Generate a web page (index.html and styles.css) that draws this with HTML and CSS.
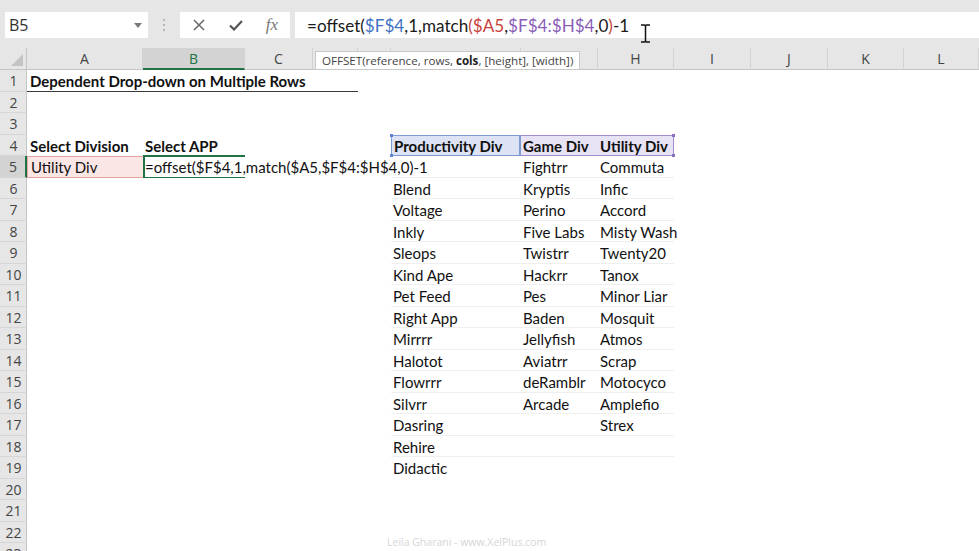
FILE: index.html
```html
<!DOCTYPE html>
<html>
<head>
<meta charset="utf-8">
<link rel="stylesheet" href="styles.css">
</head>
<body>
<div class="toolbar">
  <div class="namebox"><span>B5</span><svg width="8" height="5" viewBox="0 0 8 5"><path d="M0 0H8L4 5Z" fill="#7a7a7a"/></svg></div>
  <div class="grip"><i></i><i></i><i></i></div>
  <div class="fxbox">
    <span class="fxbtn w38"><svg width="12" height="12" viewBox="0 0 12 12"><path d="M1 1L11 11M11 1L1 11" stroke="#6b6b6b" stroke-width="1.6" fill="none"/></svg></span>
    <span class="fxbtn"><svg width="14" height="11" viewBox="0 0 14 11"><path d="M1 5.5L5 9.5L13 1" stroke="#555" stroke-width="2.2" fill="none"/></svg></span>
    <span class="fxbtn fx">fx</span>
  </div>
  <div class="formula">=offset(<span class="blue">$F$4</span>,1,match<span class="red">($A5</span>,<span class="purple">$F$4:$H$4</span>,0<span class="red">)</span>-1</div>
</div>

<div class="sheet">
  <div class="row colhead">
    <span class="corner"></span>
    <span>A</span><span class="sel">B</span><span>C</span><span></span><span></span><span></span><span></span><span>H</span><span>I</span><span>J</span><span>K</span><span>L</span>
  </div>
  <div class="row"><b class="rh">1</b><span class="cA title ul">Dependent Drop-down on Multiple Rows</span><span class="cB ul"></span><span class="cC ul"></span><span class="cD ul"></span></div>
  <div class="row"><b class="rh">2</b></div>
  <div class="row"><b class="rh">3</b></div>
  <div class="row"><b class="rh">4</b><span class="cA bold">Select Division</span><span class="cB bold">Select APP</span><span class="cF bold thF">Productivity Div</span><span class="cG bold thG">Game Div</span><span class="cH bold thH">Utility Div</span></div>
  <div class="row"><b class="rh rsel">5</b><span class="cA refA">Utility Div</span><span class="cB active"><span class="edit">=offset($F$4,1,match($A5,$F$4:$H$4,0)-1</span></span><span class="cF td"></span><span class="cG td">Fightrr</span><span class="cH td">Commuta</span></div>
  <div class="row"><b class="rh">6</b><span class="cF td">Blend</span><span class="cG td">Kryptis</span><span class="cH td">Infic</span></div>
  <div class="row"><b class="rh">7</b><span class="cF td">Voltage</span><span class="cG td">Perino</span><span class="cH td">Accord</span></div>
  <div class="row"><b class="rh">8</b><span class="cF td">Inkly</span><span class="cG td">Five Labs</span><span class="cH td">Misty Wash</span></div>
  <div class="row"><b class="rh">9</b><span class="cF td">Sleops</span><span class="cG td">Twistrr</span><span class="cH td">Twenty20</span></div>
  <div class="row"><b class="rh">10</b><span class="cF td">Kind Ape</span><span class="cG td">Hackrr</span><span class="cH td">Tanox</span></div>
  <div class="row"><b class="rh">11</b><span class="cF td">Pet Feed</span><span class="cG td">Pes</span><span class="cH td">Minor Liar</span></div>
  <div class="row"><b class="rh">12</b><span class="cF td">Right App</span><span class="cG td">Baden</span><span class="cH td">Mosquit</span></div>
  <div class="row"><b class="rh">13</b><span class="cF td">Mirrrr</span><span class="cG td">Jellyfish</span><span class="cH td">Atmos</span></div>
  <div class="row"><b class="rh">14</b><span class="cF td">Halotot</span><span class="cG td">Aviatrr</span><span class="cH td">Scrap</span></div>
  <div class="row"><b class="rh">15</b><span class="cF td">Flowrrr</span><span class="cG td">deRamblr</span><span class="cH td">Motocyco</span></div>
  <div class="row"><b class="rh">16</b><span class="cF td">Silvrr</span><span class="cG td">Arcade</span><span class="cH td">Amplefio</span></div>
  <div class="row"><b class="rh">17</b><span class="cF td">Dasring</span><span class="cG td"></span><span class="cH td">Strex</span></div>
  <div class="row"><b class="rh">18</b><span class="cF td">Rehire</span><span class="cG td"></span><span class="cH td"></span></div>
  <div class="row"><b class="rh">19</b><span class="cF">Didactic</span></div>
  <div class="row"><b class="rh">20</b></div>
  <div class="row"><b class="rh">21</b></div>
  <div class="row"><b class="rh">22</b></div>
  <div class="row"><b class="rh">23</b></div>
</div>

<div class="tooltip">OFFSET(reference, rows, <b>cols</b>, [height], [width])</div>
<svg class="ibeam" width="11" height="19" viewBox="0 0 11 19"><path d="M1 1H4.5Q5.5 1 5.5 2.5V16.5Q5.5 18 4.5 18H1M10 1H6.5Q5.5 1 5.5 2.5M5.5 16.5Q5.5 18 6.5 18H10" stroke="#111" stroke-width="1.5" fill="none"/></svg>
<div class="watermark">Leila Gharani - www.XelPlus.com</div>
</body>
</html>
```
FILE: styles.css
```css
* { box-sizing: border-box; margin: 0; padding: 0; }
html, body { width: 979px; height: 551px; overflow: hidden; background: #fff; }
body { position: relative; font-family: Lato, "Open Sans", sans-serif; color: #111; }

.toolbar { height: 48px; background: #e6e6e6; display: flex; align-items: flex-start; padding: 12px 0 0 5px; }
.namebox { width: 143px; height: 26px; background: #fff; display: flex; align-items: center; justify-content: space-between; padding: 0 6px 0 4px; font-family: "Open Sans", sans-serif; font-size: 16px; color: #333; }
.grip { width: 32px; height: 26px; display: flex; flex-direction: column; align-items: center; gap: 3px; padding-top: 7px; }
.grip i { display: block; width: 2px; height: 2px; background: #b5b5b5; }
.fxbox { width: 110px; height: 26px; background: #fff; display: flex; align-items: center; }
.fxbtn { width: 36px; height: 26px; display: flex; align-items: center; justify-content: center; }
.fxbtn.w38 { width: 38px; }
.fx { font-family: "Liberation Serif", serif; font-style: italic; font-size: 17px; color: #777; }
.formula { flex: 1; margin-left: 5px; height: 26px; background: #fff; padding-left: 12px; font-size: 17.1px; line-height: 28px; color: #1a1a1a; white-space: nowrap; }
.blue { color: #3f72c4; }
.red { color: #c7433b; }
.purple { color: #8a5db8; }

.sheet { display: flex; flex-direction: column; }
.row { display: grid; grid-template-columns: 27px 116px 102px 68px 45px 33px 130px 77px 76px 77px 77px 76px 75px; grid-template-rows: 100%; height: 21.5px; font-size: 15px; line-height: 22.5px; }
.row > * { white-space: nowrap; padding-left: 2px; }
.colhead { height: 22px; background: #e6e6e6; font-family: "Open Sans", sans-serif; font-size: 14px; color: #444; line-height: 22px; }
.colhead > span { text-align: center; padding: 0; border-right: 1px solid #d2d2d2; border-bottom: 1px solid #c4c4c4; }
.colhead > span.corner { position: relative; border-right: 1px solid #c4c4c4; }
.corner::after { content: ""; position: absolute; right: 3px; bottom: 3px; border-style: solid; border-width: 0 0 12px 12px; border-color: transparent transparent #c3c3c3 transparent; }
.colhead > span.sel { background: #d3d3d3; color: #217346; border-bottom: 2px solid #217346; }

.rh { grid-column: 1; background: #e6e6e6; font-family: "Open Sans", sans-serif; font-weight: normal; font-size: 14px; color: #444; text-align: center; padding: 0 0 0 1px !important; border-right: 1px solid #c4c4c4; border-bottom: 1px solid #d6d6d6; line-height: 21px; }
.rh.rsel { background: #d3d3d3; border-right: 2px solid #217346; }
.cA { grid-column: 2; padding-left: 3px !important; }
.cB { grid-column: 3; }
.cC { grid-column: 4; }
.cD { grid-column: 5; }
.cF { grid-column: 7; }
.cG { grid-column: 8; }
.cH { grid-column: 9; }
.bold, .title { font-weight: 700; }
.ul { border-bottom: 1px solid #3a3a3a; }
.title { position: relative; z-index: 1; }

.td { border-bottom: 1px solid #efefef; }
.thF { background: #dde2f4; border: 1px solid #7f9bd6; border-right-width: 2px; position: relative; line-height: 20.5px; }
.thG { background: #e7e2f4; border-top: 1px solid #a38fcf; border-bottom: 1px solid #a38fcf; line-height: 20.5px; }
.thH { background: #e7e2f4; border-top: 1px solid #a38fcf; border-bottom: 1px solid #a38fcf; border-right: 1px solid #a38fcf; position: relative; line-height: 20.5px; }
.thH::before, .thH::after, .thF::before, .thF::after { content: ""; position: absolute; width: 3px; height: 3px; background: #8a6fc0; }
.thH::before { right: -2px; top: -2px; }
.thH::after { right: -2px; bottom: -2px; }
.thF::before { left: -2px; top: -2px; background: #5f84cf; }
.thF::after { left: -2px; bottom: -2px; background: #5f84cf; }

.refA { background: #fbe6e6; border: 1px solid #e6a2a2; border-right: none; line-height: 20.5px; }
.active { position: relative; z-index: 2; border-top: 2px solid #217346; border-bottom: 2px solid #217346; border-left: 2px solid #217346; margin-top: -1px; padding-left: 0 !important; line-height: 20px; }
.edit { display: inline-block; background: #fff; padding-right: 3px; }

.tooltip { position: absolute; left: 315px; top: 51px; width: 265px; height: 19px; background: #fff; border: 1px solid #c8c8c8; font-family: "Open Sans", sans-serif; font-size: 11.6px; line-height: 17px; color: #444; padding-left: 6px; white-space: nowrap; }
.tooltip b { color: #222; }
.ibeam { position: absolute; left: 640px; top: 24px; }
.watermark { position: absolute; left: 387px; top: 535px; font-family: "Open Sans", sans-serif; font-size: 10.5px; color: #d6d6d6; white-space: nowrap; }
```
